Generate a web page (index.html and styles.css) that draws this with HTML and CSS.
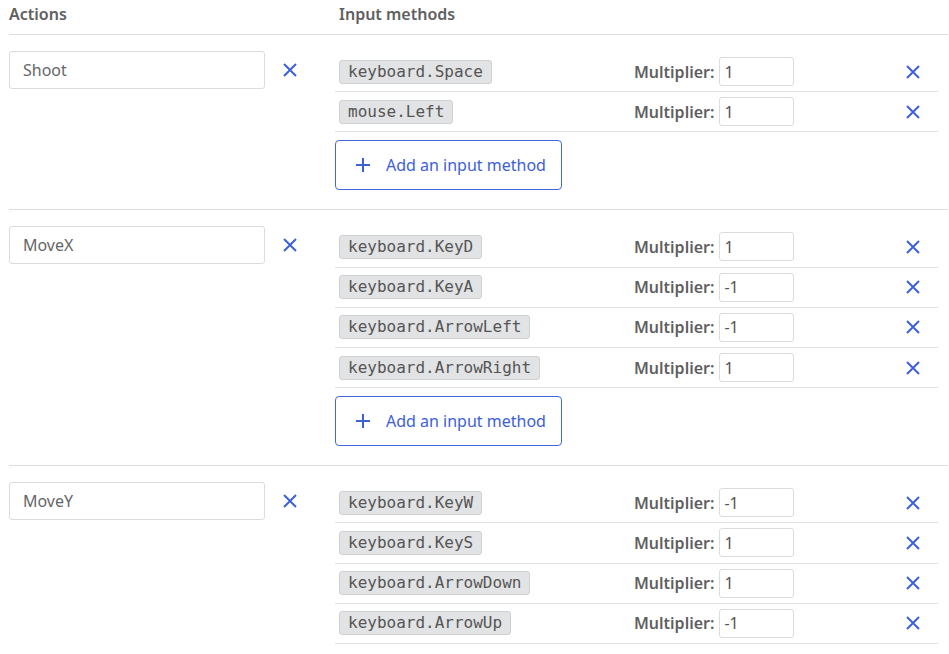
FILE: index.html
```html
<!DOCTYPE html>
<html>
<head>
<meta charset="utf-8">
<link rel="stylesheet" href="styles.css">
</head>
<body>
<div class="page">
  <div class="head">
    <div class="head-actions">Actions</div>
    <div class="head-methods">Input methods</div>
  </div>

  <div class="section">
    <div class="action">
      <input class="action-name" value="Shoot">
      <button class="x"><svg viewBox="0 0 14 14"><path d="M1 1L13 13M13 1L1 13"/></svg></button>
    </div>
    <div class="methods">
      <div class="row"><div class="c-name"><code class="chip">keyboard.Space</code></div><div class="c-mult"><span class="lbl">Multiplier:</span><input class="mult" value="1"></div><div class="c-del"><button class="x"><svg viewBox="0 0 14 14"><path d="M1 1L13 13M13 1L1 13"/></svg></button></div></div>
      <div class="row"><div class="c-name"><code class="chip">mouse.Left</code></div><div class="c-mult"><span class="lbl">Multiplier:</span><input class="mult" value="1"></div><div class="c-del"><button class="x"><svg viewBox="0 0 14 14"><path d="M1 1L13 13M13 1L1 13"/></svg></button></div></div>
      <button class="add"><svg viewBox="0 0 14 14"><path d="M7 0V14M0 7H14"/></svg><span>Add an input method</span></button>
    </div>
  </div>

  <div class="section">
    <div class="action">
      <input class="action-name" value="MoveX">
      <button class="x"><svg viewBox="0 0 14 14"><path d="M1 1L13 13M13 1L1 13"/></svg></button>
    </div>
    <div class="methods">
      <div class="row"><div class="c-name"><code class="chip">keyboard.KeyD</code></div><div class="c-mult"><span class="lbl">Multiplier:</span><input class="mult" value="1"></div><div class="c-del"><button class="x"><svg viewBox="0 0 14 14"><path d="M1 1L13 13M13 1L1 13"/></svg></button></div></div>
      <div class="row"><div class="c-name"><code class="chip">keyboard.KeyA</code></div><div class="c-mult"><span class="lbl">Multiplier:</span><input class="mult" value="-1"></div><div class="c-del"><button class="x"><svg viewBox="0 0 14 14"><path d="M1 1L13 13M13 1L1 13"/></svg></button></div></div>
      <div class="row"><div class="c-name"><code class="chip">keyboard.ArrowLeft</code></div><div class="c-mult"><span class="lbl">Multiplier:</span><input class="mult" value="-1"></div><div class="c-del"><button class="x"><svg viewBox="0 0 14 14"><path d="M1 1L13 13M13 1L1 13"/></svg></button></div></div>
      <div class="row"><div class="c-name"><code class="chip">keyboard.ArrowRight</code></div><div class="c-mult"><span class="lbl">Multiplier:</span><input class="mult" value="1"></div><div class="c-del"><button class="x"><svg viewBox="0 0 14 14"><path d="M1 1L13 13M13 1L1 13"/></svg></button></div></div>
      <button class="add"><svg viewBox="0 0 14 14"><path d="M7 0V14M0 7H14"/></svg><span>Add an input method</span></button>
    </div>
  </div>

  <div class="section">
    <div class="action">
      <input class="action-name" value="MoveY">
      <button class="x"><svg viewBox="0 0 14 14"><path d="M1 1L13 13M13 1L1 13"/></svg></button>
    </div>
    <div class="methods">
      <div class="row"><div class="c-name"><code class="chip">keyboard.KeyW</code></div><div class="c-mult"><span class="lbl">Multiplier:</span><input class="mult" value="-1"></div><div class="c-del"><button class="x"><svg viewBox="0 0 14 14"><path d="M1 1L13 13M13 1L1 13"/></svg></button></div></div>
      <div class="row"><div class="c-name"><code class="chip">keyboard.KeyS</code></div><div class="c-mult"><span class="lbl">Multiplier:</span><input class="mult" value="1"></div><div class="c-del"><button class="x"><svg viewBox="0 0 14 14"><path d="M1 1L13 13M13 1L1 13"/></svg></button></div></div>
      <div class="row"><div class="c-name"><code class="chip">keyboard.ArrowDown</code></div><div class="c-mult"><span class="lbl">Multiplier:</span><input class="mult" value="1"></div><div class="c-del"><button class="x"><svg viewBox="0 0 14 14"><path d="M1 1L13 13M13 1L1 13"/></svg></button></div></div>
      <div class="row"><div class="c-name"><code class="chip">keyboard.ArrowUp</code></div><div class="c-mult"><span class="lbl">Multiplier:</span><input class="mult" value="-1"></div><div class="c-del"><button class="x"><svg viewBox="0 0 14 14"><path d="M1 1L13 13M13 1L1 13"/></svg></button></div></div>
    </div>
  </div>
</div>
</body>
</html>
```

FILE: styles.css
```css
* { box-sizing: border-box; }
html, body { margin: 0; padding: 0; background: #fff; }
body {
  font-family: "Noto Sans", "Open Sans", sans-serif;
  font-size: 16px;
  color: #555;
  overflow: hidden;
}
.page { margin: 0 1px 0 9px; }

.head {
  display: grid;
  grid-template-columns: 316px 1fr;
  height: 35px;
  border-bottom: 1px solid #dedede;
  font-weight: 600;
  line-height: 22px;
  padding-top: 3px;
  color: #606060;
}
.head-methods { padding-left: 14px; }

.section {
  display: grid;
  grid-template-columns: 316px 1fr;
  border-bottom: 1px solid #dedede;
}
.action {
  display: flex;
  align-items: center;
  padding-top: 16px;
  align-self: start;
}
.action-name {
  width: 256px;
  height: 38px;
  border: 1px solid #dcdcdc;
  border-radius: 3px;
  padding: 0 13px;
  font: inherit;
  color: #666;
  background: #fff;
  outline: none;
}
.x {
  border: 0;
  background: none;
  padding: 0;
  margin: 0;
  width: 14px;
  height: 14px;
  display: block;
  cursor: pointer;
}
.x svg, .add svg {
  display: block;
  width: 14px;
  height: 14px;
  stroke: #3d60d9;
  stroke-width: 2;
  fill: none;
}
.action .x { margin-left: 18px; }

.methods {
  padding: 17px 10px 19px 10px;
}
.row {
  display: grid;
  grid-template-columns: 295px 258px 1fr;
  align-items: center;
  height: 40.2px;
  border-bottom: 1px solid #e0e0e0;
}
.c-name { padding-left: 4px; }
.chip {
  display: inline-block;
  font-family: "DejaVu Sans Mono", monospace;
  font-size: 16px;
  line-height: 22px;
  padding: 0 8px;
  background: #e2e3e5;
  border: 1px solid #cfd0d2;
  border-radius: 3px;
  color: #555;
}
.c-mult {
  display: flex;
  align-items: center;
  padding-left: 4px;
}
.lbl { font-weight: 600; color: #5f5f5f; }
.mult {
  margin-left: 5px;
  width: 75px;
  height: 29px;
  border: 1px solid #dcdcdc;
  border-radius: 3px;
  padding: 0 4px;
  font: inherit;
  color: #555;
  outline: none;
}
.c-del { display: flex; justify-content: center; }

.add {
  margin-top: 8px;
  display: flex;
  align-items: center;
  height: 50px;
  width: 227px;
  padding: 0 0 0 20px;
  background: #fff;
  border: 1px solid #4466dc;
  border-radius: 4px;
  font: inherit;
  color: #3d60d9;
  cursor: pointer;
}
.add span { margin-left: 16px; }
```
